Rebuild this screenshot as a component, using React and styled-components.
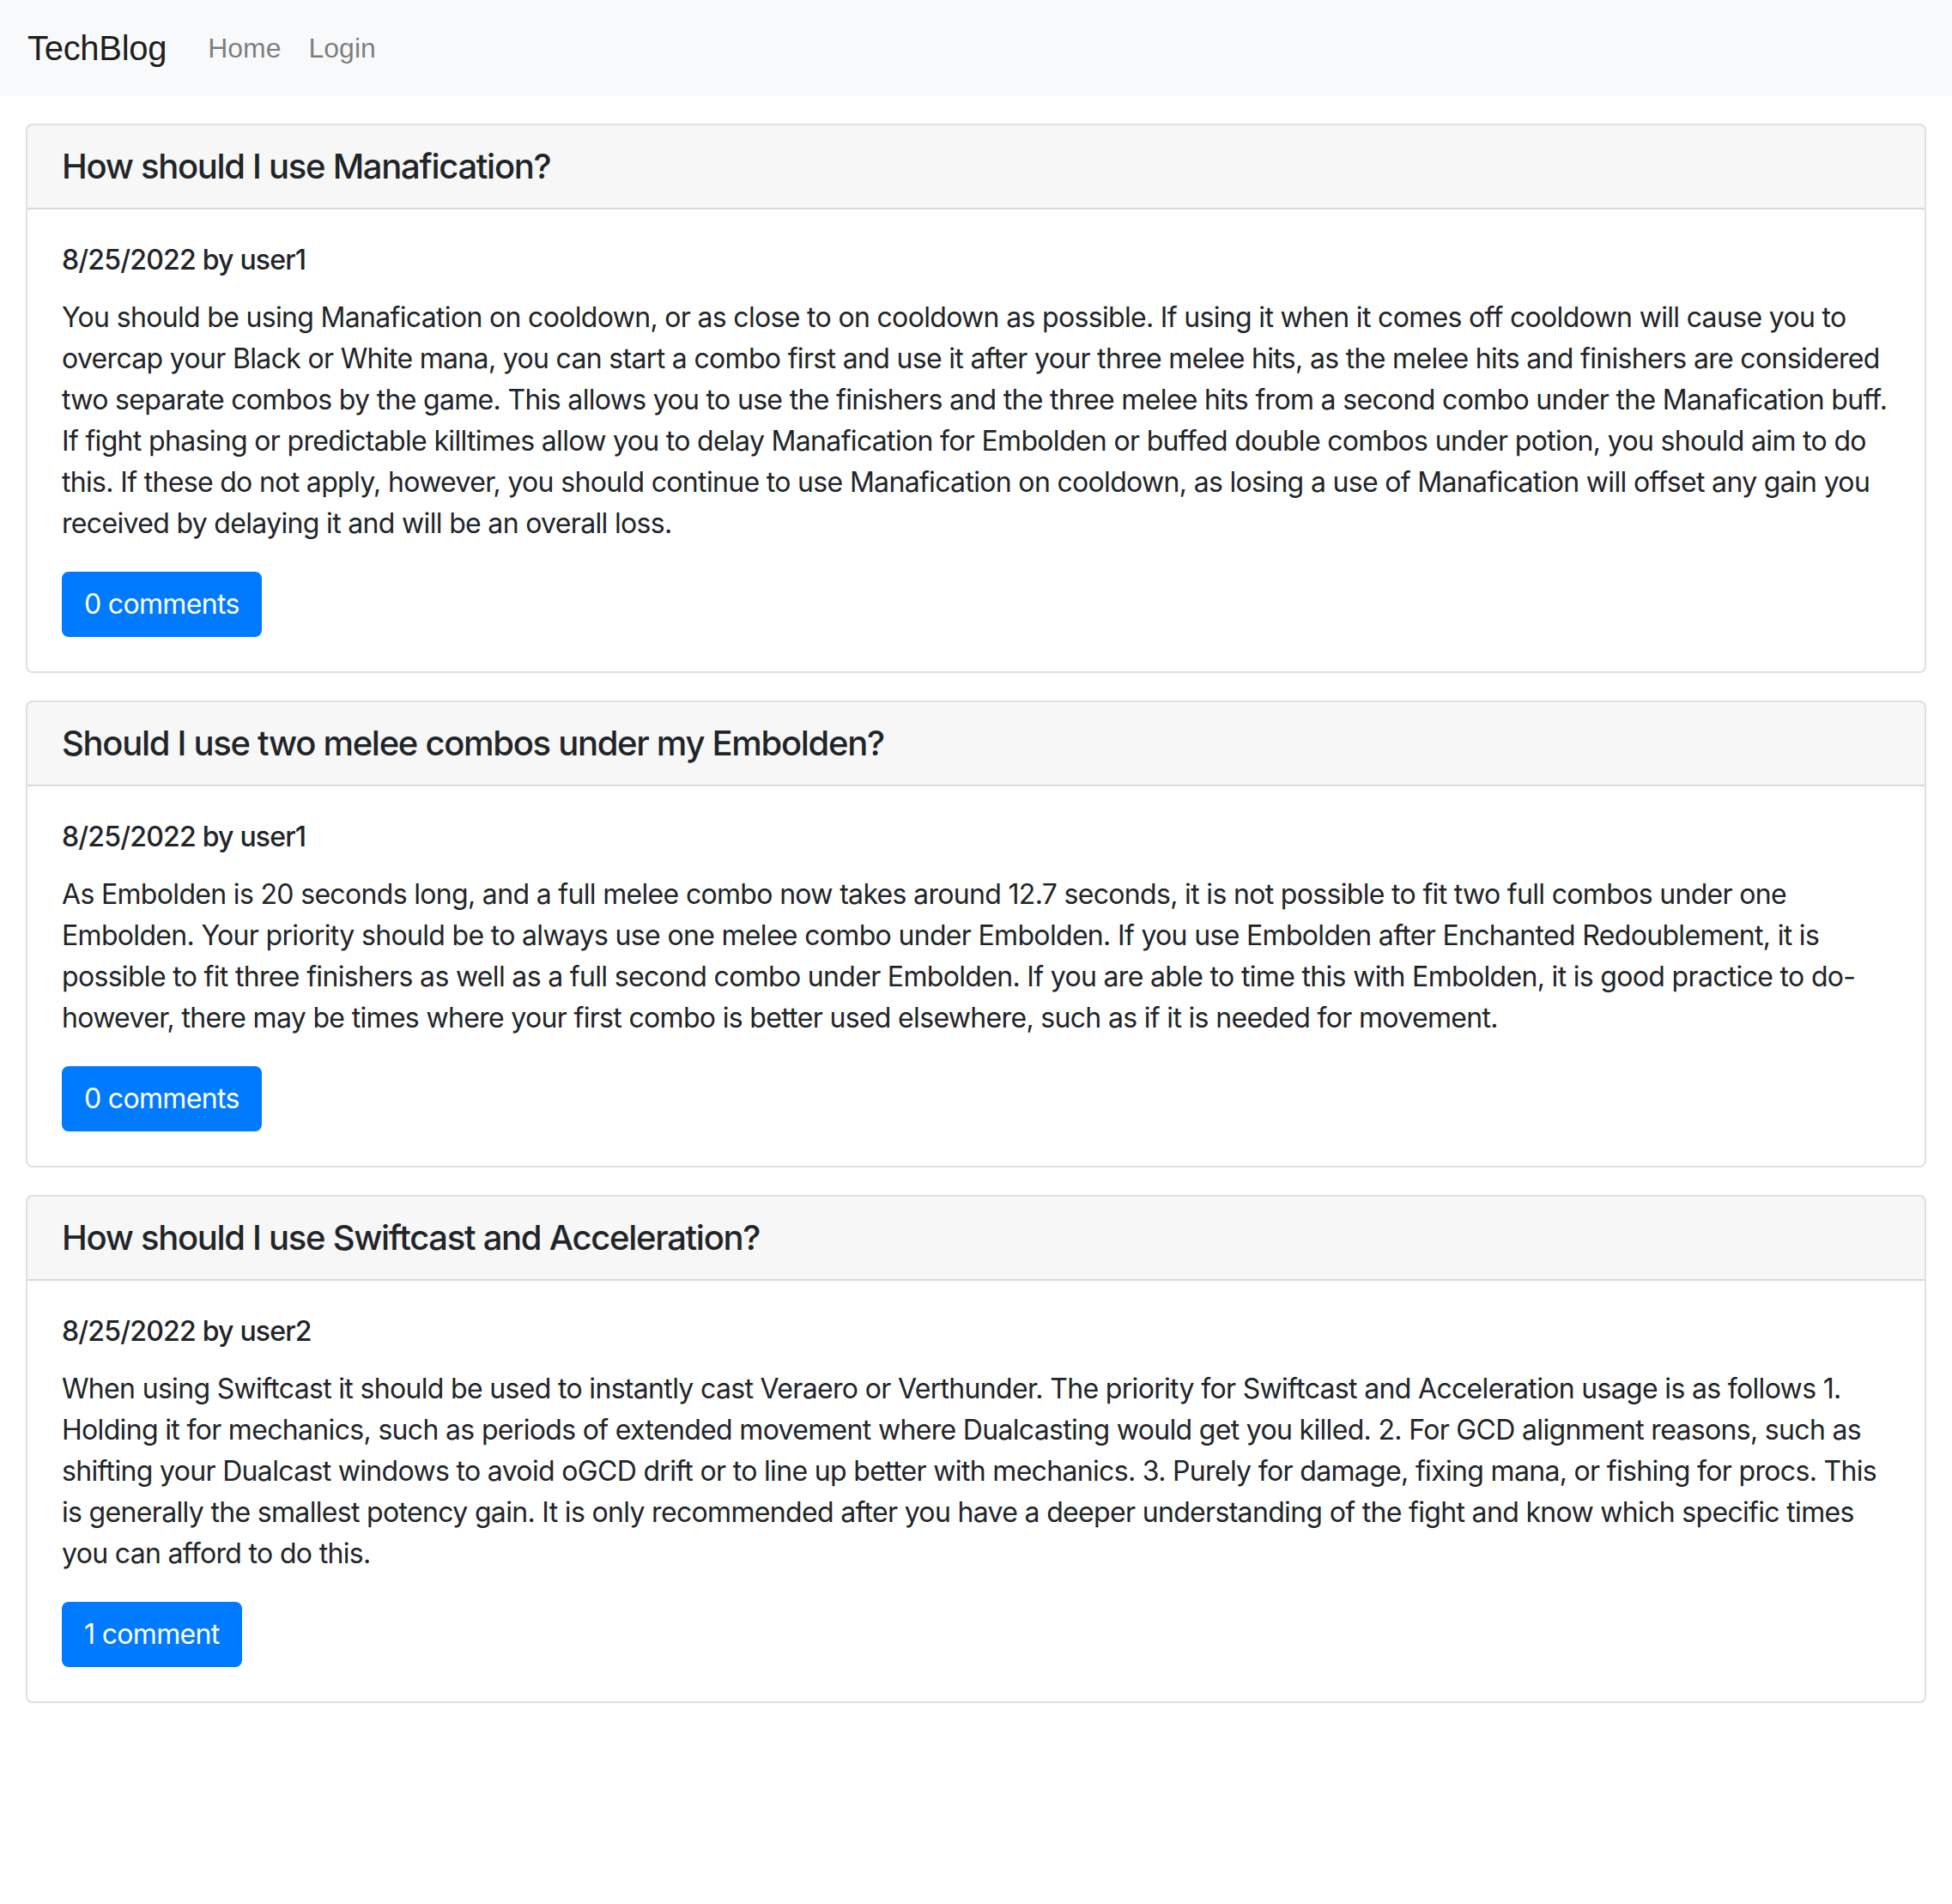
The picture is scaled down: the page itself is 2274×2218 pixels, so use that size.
import React from 'react'
import styled, { createGlobalStyle } from 'styled-components';

const GlobalStyle = createGlobalStyle`
  * { box-sizing: border-box; }
  body {
    margin: 0;
    font-family: Inter, "Noto Sans", "Liberation Sans", sans-serif;
    font-size: 32px;
    line-height: 1.5;
    letter-spacing: -0.021em;
    color: #212529;
    background: #fff;
  }
`

const posts = [
    {
        title: "How should I use Manafication?",
        date: "8/25/2022",
        user: "user1",
        comments: 0,
        body: "You should be using Manafication on cooldown, or as close to on cooldown as possible. If using it when it comes off cooldown will cause you to overcap your Black or White mana, you can start a combo first and use it after your three melee hits, as the melee hits and finishers are considered two separate combos by the game. This allows you to use the finishers and the three melee hits from a second combo under the Manafication buff. If fight phasing or predictable killtimes allow you to delay Manafication for Embolden or buffed double combos under potion, you should aim to do this. If these do not apply, however, you should continue to use Manafication on cooldown, as losing a use of Manafication will offset any gain you received by delaying it and will be an overall loss."
    },
    {
        title: "Should I use two melee combos under my Embolden?",
        date: "8/25/2022",
        user: "user1",
        comments: 0,
        body: "As Embolden is 20 seconds long, and a full melee combo now takes around 12.7 seconds, it is not possible to fit two full combos under one Embolden. Your priority should be to always use one melee combo under Embolden. If you use Embolden after Enchanted Redoublement, it is possible to fit three finishers as well as a full second combo under Embolden. If you are able to time this with Embolden, it is good practice to do- however, there may be times where your first combo is better used elsewhere, such as if it is needed for movement."
    },
    {
        title: "How should I use Swiftcast and Acceleration?",
        date: "8/25/2022",
        user: "user2",
        comments: 1,
        body: "When using Swiftcast it should be used to instantly cast Veraero or Verthunder. The priority for Swiftcast and Acceleration usage is as follows 1. Holding it for mechanics, such as periods of extended movement where Dualcasting would get you killed. 2. For GCD alignment reasons, such as shifting your Dualcast windows to avoid oGCD drift or to line up better with mechanics. 3. Purely for damage, fixing mana, or fishing for procs. This is generally the smallest potency gain. It is only recommended after you have a deeper understanding of the fight and know which specific times you can afford to do this."
    }
];

export default function App() {
    return (
        <>
            <GlobalStyle />
            <Navbar>
                <Brand href="#">TechBlog</Brand>
                <NavLink href="#">Home</NavLink>
                <NavLink href="#">Login</NavLink>
            </Navbar>
            <Container>
                {posts.map((post, i) => (
                    <Card key={i}>
                        <CardHeader>
                            <Title>{post.title}</Title>
                        </CardHeader>
                        <CardBody>
                            <Meta>{post.date} by {post.user}</Meta>
                            <Text>{post.body}</Text>
                            <Button>
                                {post.comments} {post.comments === 1 ? "comment" : "comments"}
                            </Button>
                        </CardBody>
                    </Card>
                ))}
            </Container>
        </>
    );
}

const Navbar = styled.nav`
    display: flex;
    align-items: center;
    padding: 16px 32px;
    background: #f8f9fa;
    font-family: "Liberation Sans", Arial, sans-serif;
    letter-spacing: 0;
`

const Brand = styled.a`
    font-size: 40px;
    line-height: 1.5;
    padding: 10px 0;
    margin-right: 32px;
    letter-spacing: -0.3px;
    color: rgba(0, 0, 0, 0.9);
    text-decoration: none;
`

const NavLink = styled.a`
    padding: 8px 16px;
    color: rgba(0, 0, 0, 0.5);
    text-decoration: none;
`

const Container = styled.main`
    padding: 0 30px;
`

const Card = styled.section`
    margin-top: 32px;
    border: 2px solid rgba(0, 0, 0, 0.125);
    border-radius: 8px;
    overflow: hidden;
    background: #fff;
`

const CardHeader = styled.div`
    padding: 24px 40px;
    background: rgba(0, 0, 0, 0.03);
    border-bottom: 2px solid rgba(0, 0, 0, 0.125);
`

const Title = styled.h5`
    margin: 0;
    font-size: 40px;
    font-weight: 500;
    line-height: 1.2;
    letter-spacing: -1.3px;
`

const CardBody = styled.div`
    padding: 40px;
`

const Meta = styled.h6`
    margin: 0 0 23.6px;
    font-size: 32px;
    font-weight: 500;
    line-height: 1.2;
    letter-spacing: -0.8px;
`

const Text = styled.p`
    margin: 0 0 32px;
`

const Button = styled.button`
    font-family: inherit;
    font-size: 32px;
    line-height: 1.5;
    letter-spacing: inherit;
    padding: 12px 24px;
    color: #fff;
    background: #007bff;
    border: 2px solid #007bff;
    border-radius: 8px;
    cursor: pointer;
`
